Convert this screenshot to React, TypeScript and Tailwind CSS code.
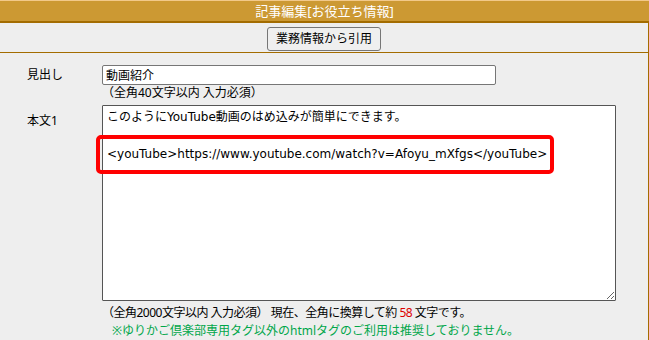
import React from 'react';

const font = "font-['Noto_Sans','Noto_Sans_CJK_JP',sans-serif]";

const body = `このようにYouTube動画のはめ込みが簡単にできます。

<youTube>https://www.youtube.com/watch?v=Afoyu_mXfgs</youTube>`;

export default function App() {
  return (
    <div className={`${font} w-full h-[340px] flex flex-col bg-[#eeeeee] text-[12px] text-black overflow-hidden`}>
      {/* title bar */}
      <div className="h-[23px] flex items-center justify-center bg-[#cc9933] border-t border-[#f2c98a] border-b-2 border-b-[#a36c00] text-white text-[13px] leading-none">
        記事編集[お役立ち情報]
      </div>

      <div className="flex-1 flex flex-col border-r border-[#a36c00]">
        <div className="h-[30px] flex justify-center pt-[4px] border-b border-[#a36c00]">
          <button className="h-[24px] px-[8px] bg-[#efefef] border border-[#767676] rounded-[3px] text-[12px] leading-none">
            業務情報から引用
          </button>
        </div>

        <div className="grid grid-cols-[102px_1fr] pt-[12px]">
          <div className="pl-[27px] leading-[18px] pt-[1px]">見出し</div>
          <div className="flex flex-col">
            <input
              readOnly
              value="動画紹介"
              className="w-[394px] h-[20px] bg-white border border-[#767676] rounded-[2px] px-[3px] text-[12px] outline-none"
            />
            <div className="leading-[14px] mt-[1px]">（全角40文字以内 入力必須）</div>
          </div>

          <div className="pl-[27px] leading-[18px] pt-[7px] mt-[5px]">本文1</div>
          <div className="flex flex-col mt-[5px]">
            <div className="relative w-[514px]">
              <textarea
                readOnly
                value={body}
                className="block w-[514px] h-[196px] bg-white border border-[#555555] rounded-[1px] px-[4px] py-[2px] leading-[18.5px] text-[12px] outline-none font-['DejaVu_Sans','Noto_Sans_CJK_JP',sans-serif]"
              />
              <div className="absolute left-[-6px] top-[30px] w-[458px] h-[39px] border-4 border-[#ff0000] rounded-[5px] pointer-events-none" />
            </div>
            <div className="leading-[16px] mt-[4px] tracking-[-0.5px]">
              （全角2000文字以内 入力必須） 現在、全角に換算して約 <span className="text-[#dd0000]">58</span> 文字です。
            </div>
            <div className="leading-[16px] mt-[2px] pl-[10px] text-[#00a64a] text-[12px]">
              ※ゆりかご倶楽部専用タグ以外のhtmlタグのご利用は推奨しておりません。
            </div>
          </div>
        </div>
      </div>
    </div>
  );
}
